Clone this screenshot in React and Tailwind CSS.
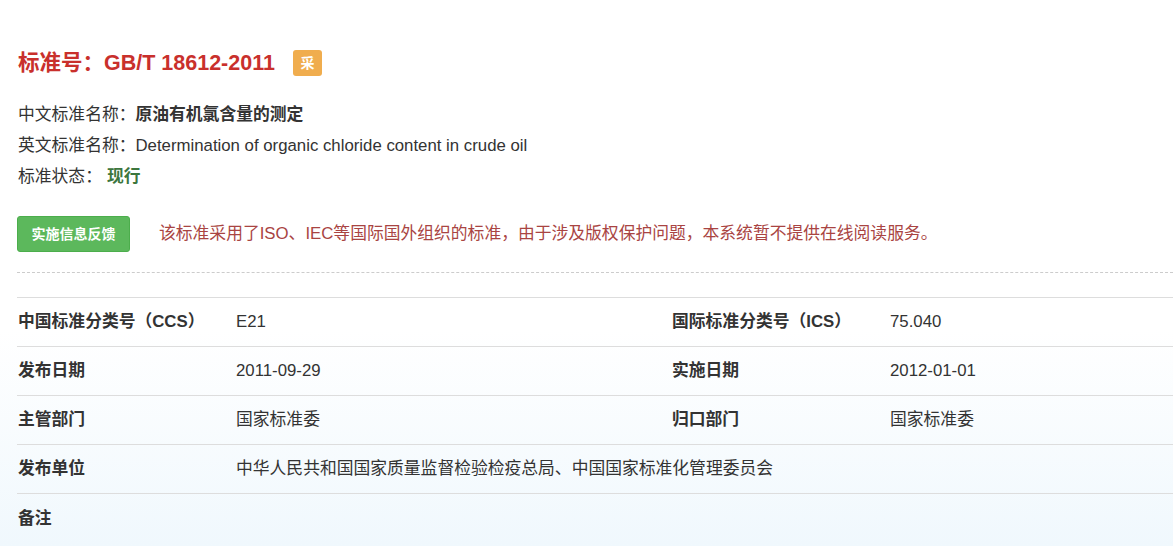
import React from "react";

const font = { fontFamily: '"Liberation Sans", "Noto Sans CJK SC", sans-serif' };

const rows = [
  [["中国标准分类号（CCS）", "E21"], ["国际标准分类号（ICS）", "75.040"]],
  [["发布日期", "2011-09-29"], ["实施日期", "2012-01-01"]],
  [["主管部门", "国家标准委"], ["归口部门", "国家标准委"]],
  [["发布单位", "中华人民共和国国家质量监督检验检疫总局、中国国家标准化管理委员会"]],
  [["备注", ""]],
];

export default function App() {
  return (
    <div
      className="min-h-[546px] w-[1173px] overflow-hidden text-[#333] bg-[linear-gradient(to_bottom,#ffffff_330px,#f0f8fd_546px)]"
      style={font}
    >
      <div className="pl-[17px] pt-[49px]">
        <div className="flex items-center h-[28px]">
          <h1 className="text-[21.5px] font-bold text-[#c9302c] leading-[28px] pl-px whitespace-nowrap">
            标准号：GB/T 18612-2011
          </h1>
          <span className="ml-[18px] inline-flex items-center justify-center w-[29px] h-[26px] rounded-[3px] bg-[#f0ad4e] text-white text-[14px] font-bold">
            采
          </span>
        </div>

        <div className="mt-[22px] text-[16.8px] pl-px">
          <div className="h-[31px] leading-[31px]">
            中文标准名称：<span className="font-bold">原油有机氯含量的测定</span>
          </div>
          <div className="h-[31px] leading-[31px]">
            英文标准名称：Determination of organic chloride content in crude oil
          </div>
          <div className="h-[31px] leading-[31px]">
            标准状态：<span className="ml-[5px] font-bold text-[#3c763d]">现行</span>
          </div>
        </div>

        <div className="mt-[24px] flex items-center">
          <button className="w-[113px] h-[36px] rounded-[3px] bg-[#5cb85c] border border-[#4cae4c] text-white text-[14px] font-bold">
            实施信息反馈
          </button>
          <span className="ml-[29px] text-[16.8px] text-[#a94442] whitespace-nowrap">
            该标准采用了ISO、IEC等国际国外组织的标准，由于涉及版权保护问题，本系统暂不提供在线阅读服务。
          </span>
        </div>

        <div className="mt-[20px] border-t border-dashed border-[#cccccc]" />

        <div className="mt-[24px] w-[1308px] border-t border-[#dddddd] text-[16.8px]">
          {rows.map((row, i) => (
            <div
              key={i}
              className="flex h-[49px] items-center border-b border-[#dddddd] last:border-b-0"
            >
              {row.map(([label, value], j) => (
                <React.Fragment key={j}>
                  <div className="w-[218px] shrink-0 pl-px font-bold whitespace-nowrap">{label}</div>
                  <div
                    className={
                      row.length === 1
                        ? "flex-1 pl-px whitespace-nowrap"
                        : "w-[436px] shrink-0 pl-px whitespace-nowrap"
                    }
                  >
                    {value}
                  </div>
                </React.Fragment>
              ))}
            </div>
          ))}
        </div>
      </div>
    </div>
  );
}
